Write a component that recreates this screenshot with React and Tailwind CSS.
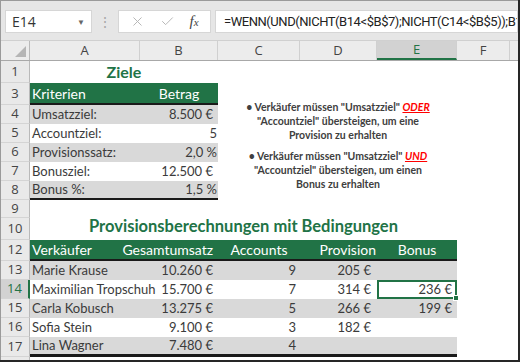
import { X, Check } from "lucide-react";

const cellFont = "font-['Lato','Carlito',sans-serif]";
const uiFont = "font-['Open_Sans','Noto_Sans',sans-serif]";

const cols = [
  { k: "A", w: "w-[110px]" },
  { k: "B", w: "w-[78px]" },
  { k: "C", w: "w-[82px]" },
  { k: "D", w: "w-[77px]" },
  { k: "E", w: "w-[80px]", active: true },
  { k: "F", w: "w-[53px]" },
];

const ziele = [
  ["Umsatzziel:", "8.500 €", true],
  ["Accountziel:", "5", false],
  ["Provisionssatz:", "2,0 %", false],
  ["Bonusziel:", "12.500 €", true],
  ["Bonus %:", "1,5 %", false],
];

const verkaeufer = [
  ["Marie Krause", "10.260 €", "9", "205 €", ""],
  ["Maximilian Tropschuh", "15.700 €", "7", "314 €", "236 €"],
  ["Carla Kobusch", "13.275 €", "5", "266 €", "199 €"],
  ["Sofia Stein", "9.100 €", "3", "182 €", ""],
  ["Lina Wagner", "7.480 €", "4", "", ""],
];

function RowHead({ n, active }) {
  return (
    <div
      className={
        "w-[29px] shrink-0 flex items-center justify-center border-b border-b-[#d4d4d4] text-[13px] " +
        uiFont +
        (active
          ? " bg-[#d2d2d2] text-[#217346] border-r-2 border-r-[#217346]"
          : " bg-[#e9e9e9] text-[#444] border-r border-r-[#b9b9b9]")
      }
    >
      {n}
    </div>
  );
}

function Row({ n, h, active, children }) {
  return (
    <div className={"flex shrink-0 " + h}>
      <RowHead n={n} active={active} />
      {children}
    </div>
  );
}

export default function App() {
  return (
    <div className="w-[520px] h-[362px] bg-[#262626] pr-[2px] pb-[2px]">
      <div className="relative h-full border-l border-t border-[#9a9a9a] bg-white flex flex-col overflow-hidden">
        {/* Formelleiste */}
        <div className={"h-[39px] shrink-0 bg-[#e6e6e6] flex items-start pt-[9px] " + uiFont}>
          <div className="ml-[4px] w-[87px] h-[23px] bg-white border border-[#d6d6d6] flex items-center justify-between px-[6px] text-[14px] text-[#333]">
            <span>E14</span>
            <span className="text-[8px] text-[#666]">▼</span>
          </div>
          <div className="w-[26px] h-[23px] flex items-center justify-center text-[14px] text-[#a8a8a8]">⋮</div>
          <div className="w-[93px] h-[23px] bg-white border border-[#d6d6d6] flex items-center justify-around px-[4px]">
            <X size={15} strokeWidth={1.5} className="text-[#b3b3b3]" />
            <Check size={15} strokeWidth={1.5} className="text-[#b3b3b3]" />
            <span className="font-['Liberation_Serif',serif] italic text-[15px] text-[#444]">
              f<span className="text-[11px]">x</span>
            </span>
          </div>
          <div className="ml-[4px] flex-1 h-[23px] bg-white border border-[#d6d6d6] flex items-center pl-[8px] font-['Roboto',sans-serif] text-[13px] tracking-[-0.45px] text-[#222] whitespace-nowrap overflow-hidden">
            =WENN(UND(NICHT(B14&lt;$B$7);NICHT(C14&lt;$B$5));B14*$B$8;0)
          </div>
        </div>

        {/* Spaltenköpfe */}
        <div className={"h-[21px] shrink-0 flex bg-[#ececec] border-t border-[#d0d0d0] border-b border-b-[#a8a8a8] text-[13px] " + uiFont}>
          <div className="w-[29px] shrink-0 border-r border-r-[#b9b9b9] flex items-end justify-end p-[3px]">
            <div className="w-0 h-0 border-l-[11px] border-l-transparent border-b-[11px] border-b-[#b5b5b5]" />
          </div>
          {cols.map((c) => (
            <div
              key={c.k}
              className={
                "shrink-0 flex items-center justify-center border-r border-r-[#d0d0d0] " +
                c.w +
                (c.active ? " bg-[#d2d2d2] text-[#217346] border-b-2 border-b-[#217346]" : " text-[#444]")
              }
            >
              {c.k}
            </div>
          ))}
          <div className="flex-1" />
        </div>

        {/* Tabellenbereich */}
        <div className={"flex flex-col text-[13px] text-[#3b3b3b] " + cellFont}>
          <Row n="1" h="h-[22px]">
            <div className="w-[188px] shrink-0 flex items-center justify-center font-bold text-[16px] text-[#217346]">Ziele</div>
          </Row>
          <Row n="3" h="h-[22px]">
            <div className="w-[110px] shrink-0 flex items-center pl-[2px] text-[14px] bg-[#217346] text-white border-b-2 border-[#1a1a1a]">Kriterien</div>
            <div className="w-[78px] shrink-0 flex items-center justify-center text-[14px] bg-[#217346] text-white border-b-2 border-[#1a1a1a]">Betrag</div>
          </Row>
          {ziele.map(([label, value, euro], i) => {
            const gray = i % 2 === 0;
            const last = i === ziele.length - 1;
            const bg = (gray ? " bg-[#d9d9d9]" : "") + (last ? " border-b-2 border-[#1a1a1a]" : "");
            return (
              <Row key={label} n={String(i + 4)} h="h-[19px]">
                <div className={"w-[110px] shrink-0 flex items-center pl-[2px] whitespace-nowrap" + bg}>{label}</div>
                <div className={"w-[78px] shrink-0 flex items-center justify-end" + (euro ? " pr-[5px]" : " pr-[1px]") + bg}>{value}</div>
              </Row>
            );
          })}
          <Row n="9" h="h-[18px]" />
          <Row n="10" h="h-[22px]">
            <div className="w-[427px] shrink-0 flex items-end justify-center pb-[1px] font-bold text-[16.5px] text-[#217346] whitespace-nowrap">
              Provisionsberechnungen mit Bedingungen
            </div>
          </Row>
          <Row n="12" h="h-[21px]">
            <div className="w-[110px] shrink-0 flex items-center pl-[2px] text-[14px] bg-[#217346] text-white border-b-2 border-[#1a1a1a]">Verkäufer</div>
            <div className="w-[78px] shrink-0 flex items-center justify-end pr-[5px] text-[14px] bg-[#217346] text-white border-b-2 border-[#1a1a1a]">Gesamtumsatz</div>
            <div className="w-[82px] shrink-0 flex items-center justify-center text-[14px] bg-[#217346] text-white border-b-2 border-[#1a1a1a]">Accounts</div>
            <div className="w-[77px] shrink-0 flex items-center justify-end pr-[1px] text-[14px] bg-[#217346] text-white border-b-2 border-[#1a1a1a]">Provision</div>
            <div className="w-[80px] shrink-0 flex items-center justify-center text-[14px] bg-[#217346] text-white border-b-2 border-[#1a1a1a]">Bonus</div>
          </Row>
          {verkaeufer.map(([name, umsatz, acc, prov, bonus], i) => {
            const gray = i % 2 === 0;
            const last = i === verkaeufer.length - 1;
            const sel = i === 1;
            const bg = (gray ? " bg-[#d9d9d9]" : "") + (last ? " border-b-[3px] border-[#1a1a1a]" : "");
            return (
              <Row key={name} n={String(i + 13)} h={last ? "h-[20px]" : "h-[19px]"} active={sel}>
                <div className={"w-[110px] shrink-0 flex items-center pl-[2px] whitespace-nowrap" + bg}>{name}</div>
                <div className={"w-[78px] shrink-0 flex items-center justify-end pr-[5px]" + bg}>{umsatz}</div>
                <div className={"w-[82px] shrink-0 flex items-center justify-end pr-[4px]" + bg}>{acc}</div>
                <div className={"w-[77px] shrink-0 flex items-center justify-end pr-[6px]" + bg}>{prov}</div>
                {sel ? (
                  <div className="relative z-10 w-[80px] shrink-0 flex items-center justify-end pr-[3px] border-2 border-[#217346] bg-white">
                    {bonus}
                    <div className="absolute -right-[4px] -bottom-[4px] w-[6px] h-[6px] bg-[#217346] border border-white" />
                  </div>
                ) : (
                  <div className={"w-[80px] shrink-0 flex items-center justify-end pr-[5px]" + bg}>{bonus}</div>
                )}
              </Row>
            );
          })}
          <Row n="18" h="h-[20px]" />
        </div>

        {/* Textfeld */}
        <div className={"absolute left-[236px] top-[99px] w-[202px] text-center font-bold text-[10.5px] leading-[14px] text-[#404040] " + cellFont}>
          <p>
            • Verkäufer müssen "Umsatzziel"{" "}
            <span className="italic underline text-[#ff0000]">ODER</span>
            <br />
            "Accountziel" übersteigen, um eine
            <br />
            Provision zu erhalten
          </p>
          <p className="mt-[7px]">
            • Verkäufer müssen "Umsatzziel"{" "}
            <span className="italic underline text-[#ff0000]">UND</span>
            <br />
            "Accountziel" übersteigen, um einen
            <br />
            Bonus zu erhalten
          </p>
        </div>
      </div>
    </div>
  );
}
